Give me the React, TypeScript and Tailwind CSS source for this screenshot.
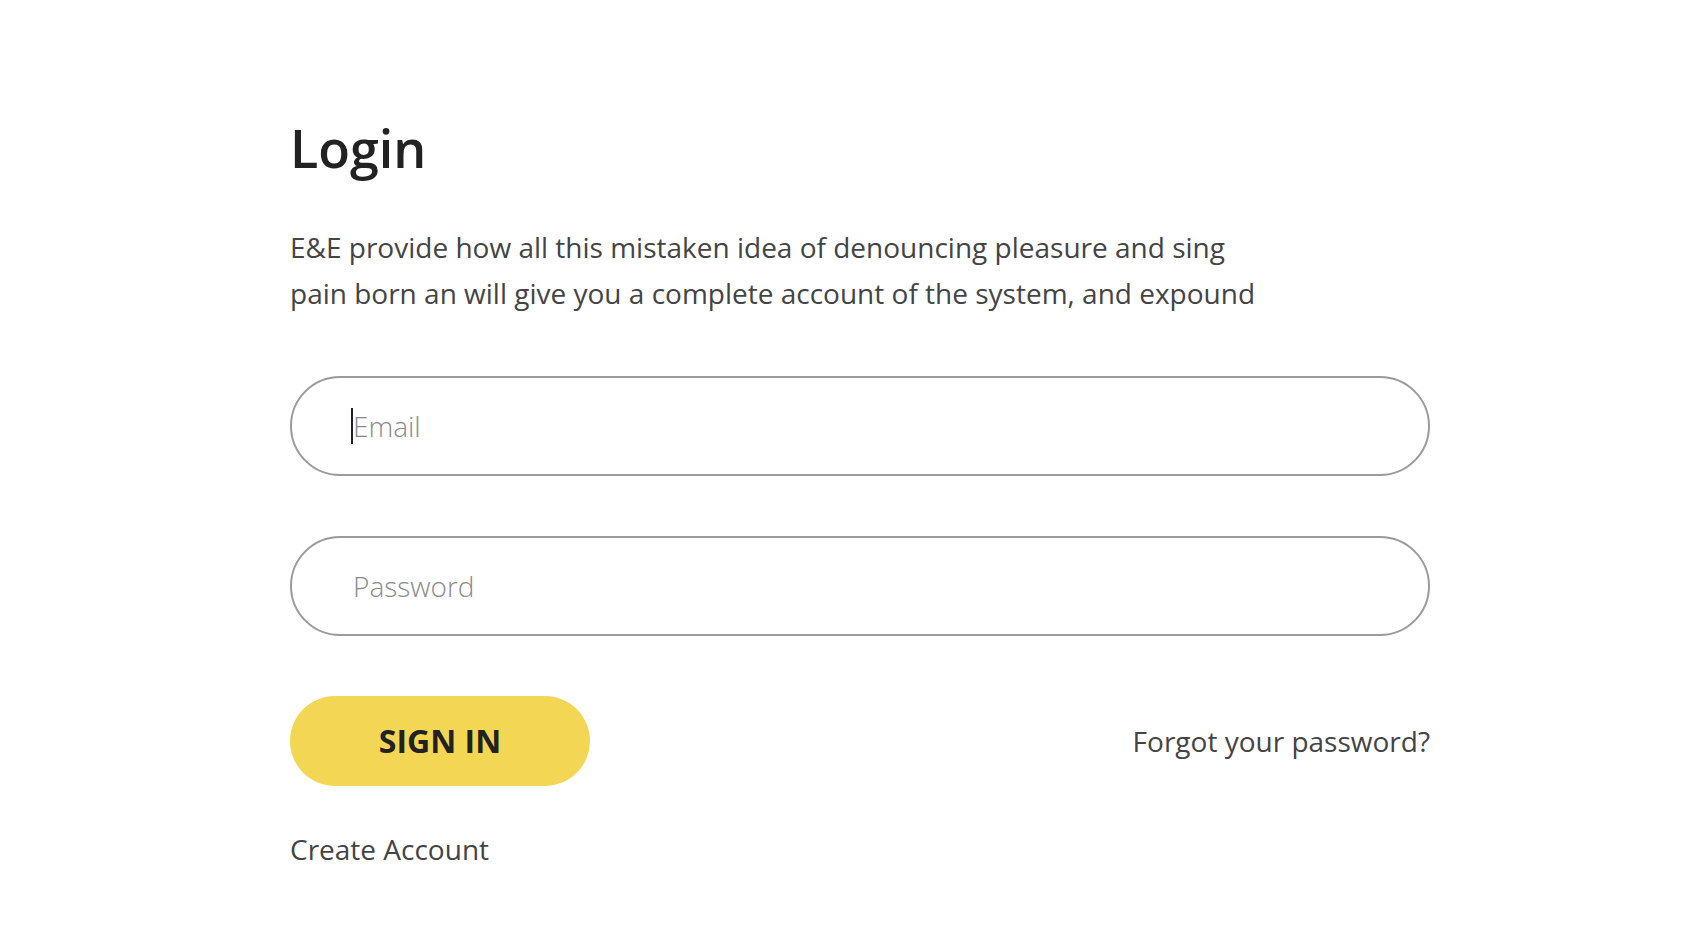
export default function App() {
    return (
        <div className="min-h-screen bg-white font-['Open_Sans',sans-serif]">
            <div className="ml-[290px] w-[1140px] pt-[118px] pb-16">
                <h1 className="text-[52px] leading-[60px] font-semibold text-[#222]">Login</h1>

                <p className="mt-[46px] w-[975px] text-[28px] leading-[46px] text-[#444]">
                    E&amp;E provide how all this mistaken idea of denouncing pleasure and sing pain born an will give you a complete account of the system, and expound
                </p>

                <form className="mt-[60px] flex flex-col gap-[60px]" onSubmit={(e) => e.preventDefault()}>
                    <div className="relative">
                        <input
                            type="email"
                            placeholder="Email"
                            className="h-[100px] w-full rounded-full border-2 border-[#9b9b9b] px-[61px] text-[28px] font-light text-[#333] placeholder:text-[#8a8a8a] outline-none"
                        />
                        {/* focused caret */}
                        <span className="pointer-events-none absolute left-[61px] top-[32px] h-[36px] w-[2px] bg-[#222]" />
                    </div>
                    <input
                        type="password"
                        placeholder="Password"
                        className="h-[100px] w-full rounded-full border-2 border-[#9b9b9b] px-[61px] text-[28px] font-light text-[#333] placeholder:text-[#8a8a8a] outline-none"
                    />
                </form>

                <div className="mt-[60px] flex items-center justify-between">
                    <button className="h-[90px] w-[300px] rounded-full bg-[#f2d654] text-[32px] font-bold text-[#222]">
                        SIGN IN
                    </button>
                    <a href="#" className="text-[28px] text-[#444]">Forgot your password?</a>
                </div>

                <a href="#" className="mt-[44px] block text-[28px] leading-[38px] text-[#444]">Create Account</a>
            </div>
        </div>
    );
}
